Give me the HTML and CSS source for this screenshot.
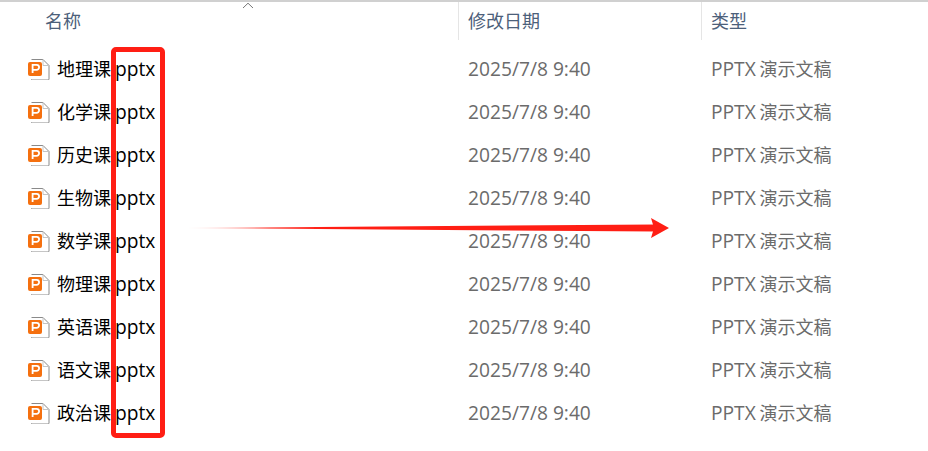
FILE: index.html
```html
<!DOCTYPE html>
<html lang="zh">
<head>
<meta charset="utf-8">
<title>文件列表</title>
<link rel="stylesheet" href="styles.css">
</head>
<body>
<svg width="0" height="0" class="defs">
  <defs>
    <symbol id="ppt" viewBox="0 0 22 22">
      <path d="M3.5 1.5H15L21 7.5V21a1 1 0 0 1-1 1H4.5a1 1 0 0 1-1-1" fill="#fff" stroke="#8a8a8a" stroke-width="1"/>
      <path d="M15 1.5V7.5H21" fill="none" stroke="#c4c4c4" stroke-width="1"/>
      <rect x="0" y="4" width="14" height="14" rx="2" fill="#f5700f"/>
      <path d="M4.6 15V6.8H8.6a2.5 2.5 0 0 1 0 5H4.6" fill="none" stroke="#fff" stroke-width="1.8"/>
    </symbol>
    <linearGradient id="shaft" x1="0" x2="1" y1="0" y2="0">
      <stop offset="0" stop-color="#ff1e14" stop-opacity=".08"/>
      <stop offset=".18" stop-color="#ff1e14" stop-opacity=".85"/>
      <stop offset=".3" stop-color="#ff1e14"/>
      <stop offset="1" stop-color="#ff1e14"/>
    </linearGradient>
  </defs>
</svg>
<main class="explorer">
  <header class="head">
    <div class="hcell hname">名称
      <svg class="sort" width="12" height="7" viewBox="0 0 12 7"><path d="M1 6L6 1.2L11 6" fill="none" stroke="#777" stroke-width="1"/></svg>
    </div>
    <div class="hcell hdate">修改日期</div>
    <div class="hcell htype">类型</div>
  </header>
  <section class="rows">
    <div class="row"><div class="name"><svg class="icon"><use href="#ppt"/></svg>地理课<span class="latin">.pptx</span></div><div class="date">2025/7/8 9:40</div><div class="type"><span class="latin">PPTX</span> 演示文稿</div></div>
    <div class="row"><div class="name"><svg class="icon"><use href="#ppt"/></svg>化学课<span class="latin">.pptx</span></div><div class="date">2025/7/8 9:40</div><div class="type"><span class="latin">PPTX</span> 演示文稿</div></div>
    <div class="row"><div class="name"><svg class="icon"><use href="#ppt"/></svg>历史课<span class="latin">.pptx</span></div><div class="date">2025/7/8 9:40</div><div class="type"><span class="latin">PPTX</span> 演示文稿</div></div>
    <div class="row"><div class="name"><svg class="icon"><use href="#ppt"/></svg>生物课<span class="latin">.pptx</span></div><div class="date">2025/7/8 9:40</div><div class="type"><span class="latin">PPTX</span> 演示文稿</div></div>
    <div class="row"><div class="name"><svg class="icon"><use href="#ppt"/></svg>数学课<span class="latin">.pptx</span></div><div class="date">2025/7/8 9:40</div><div class="type"><span class="latin">PPTX</span> 演示文稿</div></div>
    <div class="row"><div class="name"><svg class="icon"><use href="#ppt"/></svg>物理课<span class="latin">.pptx</span></div><div class="date">2025/7/8 9:40</div><div class="type"><span class="latin">PPTX</span> 演示文稿</div></div>
    <div class="row"><div class="name"><svg class="icon"><use href="#ppt"/></svg>英语课<span class="latin">.pptx</span></div><div class="date">2025/7/8 9:40</div><div class="type"><span class="latin">PPTX</span> 演示文稿</div></div>
    <div class="row"><div class="name"><svg class="icon"><use href="#ppt"/></svg>语文课<span class="latin">.pptx</span></div><div class="date">2025/7/8 9:40</div><div class="type"><span class="latin">PPTX</span> 演示文稿</div></div>
    <div class="row"><div class="name"><svg class="icon"><use href="#ppt"/></svg>政治课<span class="latin">.pptx</span></div><div class="date">2025/7/8 9:40</div><div class="type"><span class="latin">PPTX</span> 演示文稿</div></div>
  </section>
  <div class="mark"></div>
  <svg class="arrow" width="490" height="30" viewBox="0 0 490 30">
    <path d="M0 15L470 11.5V18.5L0 15Z" fill="url(#shaft)"/>
    <path d="M466 5L484 15L466 25L469 15Z" fill="#ff1e14"/>
  </svg>
</main>
</body>
</html>
```
FILE: styles.css
```css
html, body {
  margin: 0;
  padding: 0;
  background: #fff;
}
.defs {
  position: absolute;
}
.explorer {
  position: relative;
  width: 928px;
  height: 451px;
  overflow: hidden;
  font-family: "Open Sans", "Noto Sans CJK SC", sans-serif;
  font-size: 18px;
  background: #fff;
  border-top: 2px solid #d0d0d0;
  box-sizing: border-box;
}
.head {
  display: grid;
  grid-template-columns: 458px 243px 1fr;
  height: 38px;
}
.hcell {
  position: relative;
  display: flex;
  align-items: center;
  box-sizing: border-box;
  color: #4c607a;
  height: 38px;
  padding-bottom: 3px;
}
.hname {
  padding-left: 45px;
}
.hdate,
.htype {
  border-left: 1px solid #e5e5e5;
  padding-left: 9px;
}
.sort {
  position: absolute;
  left: 242px;
  top: 0;
}
.rows {
  display: flex;
  flex-direction: column;
  padding-top: 6px;
}
.row {
  display: grid;
  grid-template-columns: 468px 243px 1fr;
  align-items: center;
  height: 43px;
}
.name {
  display: flex;
  align-items: baseline;
  padding-left: 28px;
  color: #000;
}
.latin {
  font-size: 19.2px;
  line-height: 18px;
}
.name .latin {
  margin-left: -1px;
}
.type .latin {
  margin-right: -1px;
}
.icon {
  align-self: center;
  width: 22px;
  height: 22px;
  margin-right: 7px;
  flex: none;
  transform: translateY(1px);
}
.date,
.type {
  color: #6b6b6b;
}
.date {
  font-size: 19.2px;
  line-height: 24px;
  padding-top: 2px;
}
.mark {
  position: absolute;
  left: 111px;
  top: 45px;
  width: 54px;
  height: 391px;
  box-sizing: border-box;
  border: 5px solid #ff1e14;
  border-radius: 5px;
}
.arrow {
  position: absolute;
  left: 185px;
  top: 211px;
}
```
